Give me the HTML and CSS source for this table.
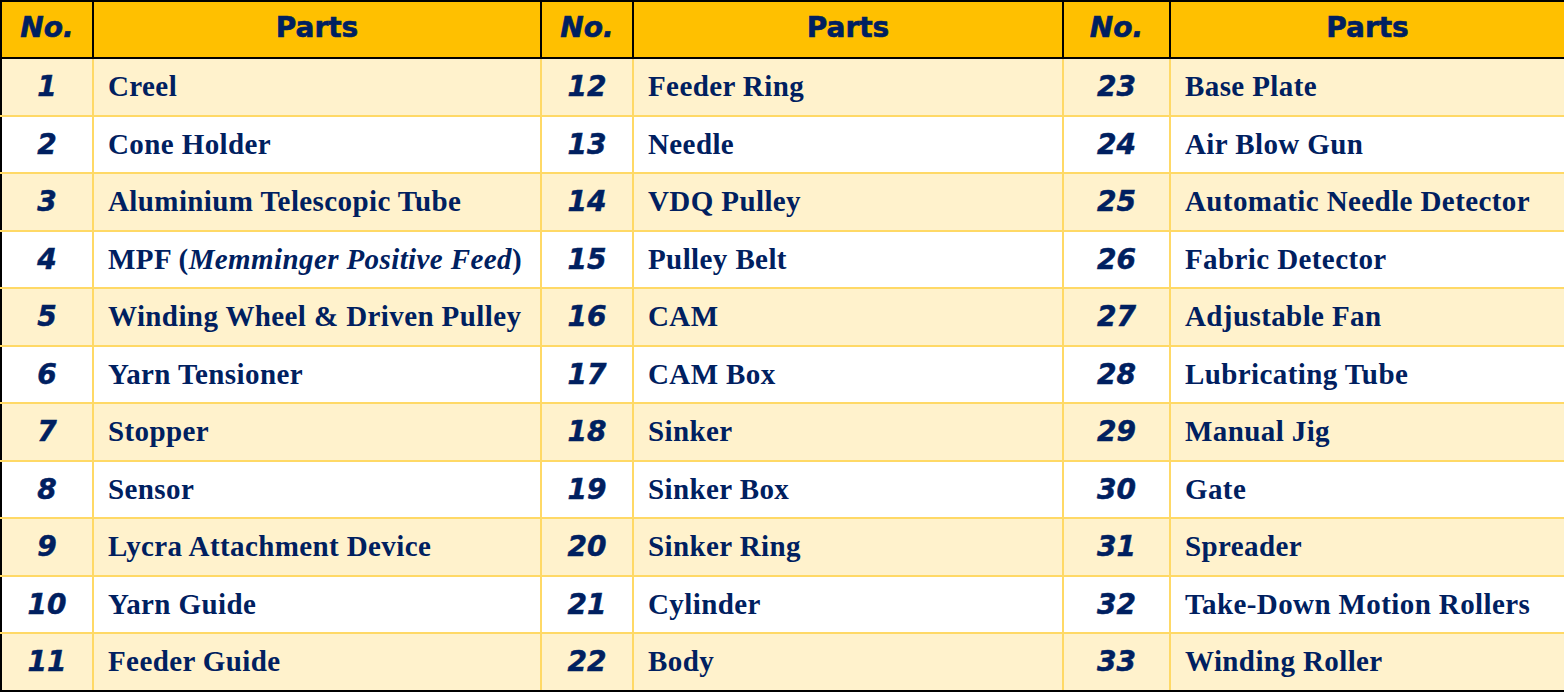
FILE: index.html
```html
<!DOCTYPE html>
<html>
<head>
<meta charset="utf-8">
<link rel="stylesheet" href="styles.css">
</head>
<body>
<table class="parts">
  <colgroup>
    <col class="c-no1"><col class="c-p1"><col class="c-no2"><col class="c-p2"><col class="c-no3"><col class="c-p3">
  </colgroup>
  <thead>
    <tr><th>No.</th><th>Parts</th><th>No.</th><th>Parts</th><th>No.</th><th>Parts</th></tr>
  </thead>
  <tbody>
    <tr><td class="n">1</td><td class="p">Creel</td><td class="n">12</td><td class="p">Feeder Ring</td><td class="n">23</td><td class="p">Base Plate</td></tr>
    <tr><td class="n">2</td><td class="p">Cone Holder</td><td class="n">13</td><td class="p">Needle</td><td class="n">24</td><td class="p">Air Blow Gun</td></tr>
    <tr><td class="n">3</td><td class="p">Aluminium Telescopic Tube</td><td class="n">14</td><td class="p">VDQ Pulley</td><td class="n">25</td><td class="p">Automatic Needle Detector</td></tr>
    <tr><td class="n">4</td><td class="p">MPF (<i>Memminger Positive Feed</i>)</td><td class="n">15</td><td class="p">Pulley Belt</td><td class="n">26</td><td class="p">Fabric Detector</td></tr>
    <tr><td class="n">5</td><td class="p">Winding Wheel &amp; Driven Pulley</td><td class="n">16</td><td class="p">CAM</td><td class="n">27</td><td class="p">Adjustable Fan</td></tr>
    <tr><td class="n">6</td><td class="p">Yarn Tensioner</td><td class="n">17</td><td class="p">CAM Box</td><td class="n">28</td><td class="p">Lubricating Tube</td></tr>
    <tr><td class="n">7</td><td class="p">Stopper</td><td class="n">18</td><td class="p">Sinker</td><td class="n">29</td><td class="p">Manual Jig</td></tr>
    <tr><td class="n">8</td><td class="p">Sensor</td><td class="n">19</td><td class="p">Sinker Box</td><td class="n">30</td><td class="p">Gate</td></tr>
    <tr><td class="n">9</td><td class="p">Lycra Attachment Device</td><td class="n">20</td><td class="p">Sinker Ring</td><td class="n">31</td><td class="p">Spreader</td></tr>
    <tr><td class="n">10</td><td class="p">Yarn Guide</td><td class="n">21</td><td class="p">Cylinder</td><td class="n">32</td><td class="p">Take-Down Motion Rollers</td></tr>
    <tr><td class="n">11</td><td class="p">Feeder Guide</td><td class="n">22</td><td class="p">Body</td><td class="n">33</td><td class="p">Winding Roller</td></tr>
  </tbody>
</table>
</body>
</html>
```
FILE: styles.css
```css
html, body {
  margin: 0;
  padding: 0;
  background: #ffffff;
}

.parts {
  border-collapse: collapse;
  table-layout: fixed;
  width: 1564px;
  border: 2px solid #000000;
  color: #002060;
}

.c-no1 { width: 92px; }
.c-p1 { width: 448px; }
.c-no2 { width: 92px; }
.c-p2 { width: 430px; }
.c-no3 { width: 107px; }
.c-p3 { width: 395px; }

.parts th {
  height: 51px;
  padding: 0 0 4px 0;
  background: #ffc000;
  border: 2px solid #000000;
  font-family: "DejaVu Sans", sans-serif;
  font-weight: bold;
  font-size: 28px;
  text-align: center;
  vertical-align: middle;
  -webkit-text-stroke: 0.6px #002060;
}

.parts thead th:nth-child(odd) {
  font-style: oblique;
}

.parts td {
  height: 55.5px;
  padding: 0;
  border: 2px solid #ffd966;
  vertical-align: middle;
}

.parts tbody tr:nth-child(odd) td {
  background: #fff2cc;
}

.parts tbody tr:nth-child(even) td {
  background: #ffffff;
}

.parts tbody tr:last-child td {
  border-bottom-color: #000000;
}

.parts td:first-child {
  border-left-color: #000000;
}

.parts td:last-child {
  border-right-color: #000000;
}

.n {
  font-family: "DejaVu Sans", sans-serif;
  font-weight: bold;
  font-style: oblique;
  font-size: 28px;
  text-align: center;
  -webkit-text-stroke: 0.5px #002060;
}

.p {
  font-family: "Liberation Serif", "Times New Roman", serif;
  font-weight: bold;
  font-size: 29px;
  letter-spacing: 0.4px;
  text-align: left;
  padding-left: 14px !important;
  white-space: nowrap;
}
```
